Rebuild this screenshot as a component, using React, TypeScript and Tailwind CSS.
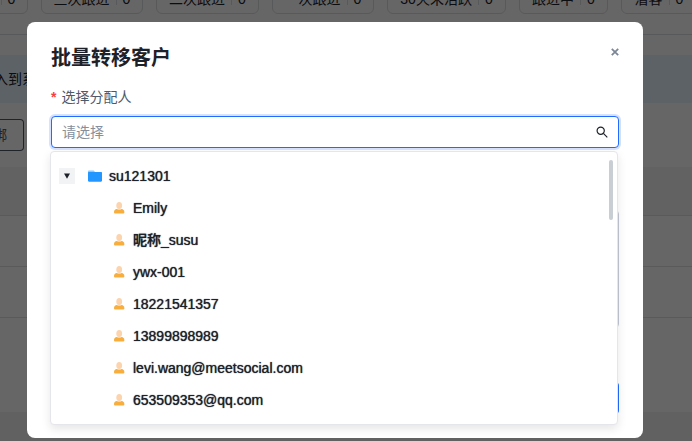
import { useState } from "react"

const FILTERS = [
    { label: "四次跟进", count: 0, width: "w-[102px]" },
    { label: "三次跟进", count: 0, width: "w-[102px]" },
    { label: "二次跟进", count: 0, width: "w-[103px]" },
    { label: "一次跟进", count: 0, width: "w-[102px]" },
    { label: "30天未活跃", count: 0, width: "w-[119px]" },
    { label: "跟进中", count: 0, width: "w-[89px]" },
    { label: "潜客", count: 0, width: "w-[76px]" },
]

const MEMBERS = [
    "Emily",
    "昵称_susu",
    "ywx-001",
    "18221541357",
    "13899898989",
    "levi.wang@meetsocial.com",
    "653509353@qq.com",
]

const SearchIcon = () => (
    <svg className="size-3" viewBox="0 0 12 12" fill="none" stroke="#1d2129" strokeWidth="1.2" aria-hidden="true">
        <circle cx="4.7" cy="4.7" r="3.6" />
        <path d="M7.4 7.4L11.3 11.3" />
    </svg>
)

const CloseIcon = () => (
    <svg className="size-2" viewBox="0 0 8 8" fill="none" stroke="#7c8796" strokeWidth="1.8" aria-hidden="true">
        <path d="M0.8 0.8L7.2 7.2M7.2 0.8L0.8 7.2" />
    </svg>
)

const FolderIcon = () => (
    <svg className="w-[14px] h-3 shrink-0" viewBox="0 0 14 12" aria-hidden="true">
        <path d="M0 1.4C0 .8.4.4 1 .4H5.6L7.6 2.4V6H0Z" fill="#8fcaff" />
        <path d="M0 2.9C0 2.3.4 1.9 1 1.9H13C13.6 1.9 14 2.3 14 2.9V10.6C14 11.3 13.6 11.7 13 11.7H1C.4 11.7 0 11.3 0 10.6Z" fill="#2396ff" />
    </svg>
)

const UserIcon = () => (
    <svg className="w-[11px] h-3 shrink-0" viewBox="0 0 11 12" aria-hidden="true">
        <ellipse cx="5.2" cy="3.6" rx="2.9" ry="3.5" fill="#fdd3ad" />
        <path d="M0 9.9C0 8.2 1.2 7.1 2.8 6.9C4.2 7.7 6.2 7.7 7.6 6.9C9.2 7.1 10.4 8.2 10.4 9.9C10.4 11 9.9 11.5 9 11.5H1.4C.5 11.5 0 11 0 9.9Z" fill="#f7ae3c" />
    </svg>
)

const CustomerPage = () => (
    <div className="flex flex-col h-full bg-white overflow-hidden">
        <div className="flex items-end gap-[13px] h-[14px] shrink-0 overflow-hidden -ml-[74px]">
            {FILTERS.map((item) => (
                <button
                    key={item.label}
                    className={`${item.width} flex items-center justify-center h-8 pt-[2px] shrink-0 border border-[#dcdee3] rounded-md whitespace-nowrap`}
                >
                    {item.label}
                    <span className="w-px h-3 mx-[6px] bg-[#dcdee3]" />
                    {item.count}
                </button>
            ))}
        </div>
        <div className="h-[21px] shrink-0 border-b border-[#dcdee3]" />
        <div className="flex items-center h-12 mt-5 shrink-0 bg-[#e8f4ff]">
            <span className="-ml-[6px]">入到系统</span>
        </div>
        <div className="flex mt-4 shrink-0">
            <button className="h-8 pr-4 border border-l-0 border-[#4e5969] rounded-r-sm text-[#4e5969]">
                <span className="-ml-[7px]">绑</span>
            </button>
        </div>
        <div className="h-[49px] mt-4 shrink-0 bg-[#f5f5f5] border-b border-[#e0e0e3]" />
        <div className="h-[51px] shrink-0 border-b border-[#e0e0e3]" />
        <div className="h-[51px] shrink-0 border-b border-[#e0e0e3]" />
        <div className="h-[94px] shrink-0" />
        <div className="flex-1 bg-[#f2f3f5]" />
    </div>
)

const AssigneeTree = () => {
    const [expanded, setExpanded] = useState(true)

    return (
        <div className="absolute top-full left-0 right-0 mt-[3px] -ml-px mr-px flex justify-between h-[274px] py-2 pl-2 pr-1 bg-white border border-[#e5e6eb] rounded-sm shadow-[0_4px_10px_rgba(0,0,0,0.1)]">
            <ul className="flex-1 overflow-hidden font-medium text-[#1d2129] [text-shadow:0_0_1px_#1d2129]">
                <li className="flex items-center h-8">
                    <button
                        type="button"
                        aria-label="展开"
                        aria-expanded={expanded}
                        onClick={() => setExpanded(!expanded)}
                        className="flex items-center justify-center size-4 bg-[#f2f3f5]"
                    >
                        <svg className="size-[6px]" viewBox="0 0 6 6" aria-hidden="true">
                            <path d="M0 .4H6L3 5.8Z" fill="#1d2129" />
                        </svg>
                    </button>
                    <span className="flex items-center gap-[7px] ml-[13px]">
                        <FolderIcon />
                        su121301
                    </span>
                </li>
                {expanded && MEMBERS.map((name) => (
                    <li key={name} className="flex items-center gap-2 h-8 pl-[55px]">
                        <UserIcon />
                        {name}
                    </li>
                ))}
            </ul>
            <div className="w-1 h-[60px] rounded-full bg-[#c9cdd4]" />
        </div>
    )
}

export default function App() {
    return (
        <div className="relative h-screen overflow-hidden font-['Liberation_Sans','Noto_Sans_CJK_SC',sans-serif] text-sm text-[#1d2129]">
            <CustomerPage />
            <div className="absolute inset-0 pt-[22px] pl-[27px] pr-[49px] bg-black/60">
                <div role="dialog" aria-labelledby="dialog-title" className="bg-white rounded-lg p-6">
                    <div className="flex justify-between -mt-1">
                        <h2 id="dialog-title" className="text-xl leading-8 font-bold">批量转移客户</h2>
                        <button type="button" aria-label="关闭" className="flex items-center justify-center size-4 -mr-1 mt-[2px]">
                            <CloseIcon />
                        </button>
                    </div>
                    <label htmlFor="assignee" className="flex gap-[5px] mt-3 leading-[22px] text-[#4e5969]">
                        <span className="font-bold text-[#f53f3f]">*</span>
                        选择分配人
                    </label>
                    <div className="relative mt-2">
                        <div className="flex items-center h-8 px-[10px] bg-white border border-[#216bff] rounded-sm ring-2 ring-[#d6e2ff]">
                            <input
                                id="assignee"
                                placeholder="请选择"
                                className="flex-1 min-w-0 outline-none placeholder:text-[#86909c]"
                            />
                            <SearchIcon />
                        </div>
                        <AssigneeTree />
                    </div>
                    <label htmlFor="remark" className="block mt-8 leading-6 text-[#4e5969]">备注</label>
                    <textarea id="remark" className="block w-full h-[118px] mt-[6px] border border-[#c3c7d4] rounded-sm resize-none" />
                    <div className="flex justify-end mt-[54px]">
                        <button type="button" className="h-8 px-4 bg-[#216bff] text-white rounded-sm">确定</button>
                    </div>
                </div>
            </div>
        </div>
    )
}
